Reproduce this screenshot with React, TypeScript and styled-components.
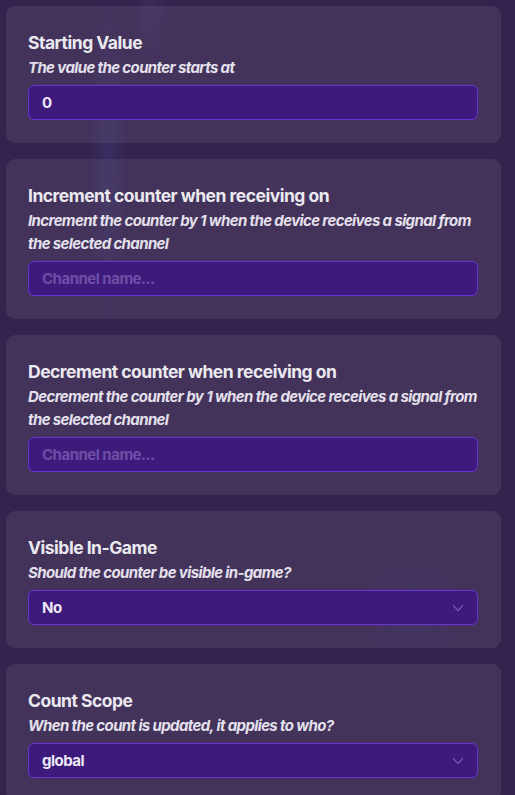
import React from 'react';
import styled, { createGlobalStyle } from 'styled-components';

const GlobalStyle = createGlobalStyle`
  html, body {
    margin: 0;
    padding: 0;
    background: #33234d;
    font-family: Inter, "Noto Sans", "Liberation Sans", sans-serif;
    overflow: hidden;
  }
`;

const Page = styled.div`
  min-height: 795px;
  box-sizing: border-box;
  padding: 6px 14px 0 6px;
  display: flex;
  flex-direction: column;
  gap: 16px;
  background-color: #33234d;
  background-image:
    radial-gradient(ellipse 20px 170px at 108px 160px, rgba(70, 75, 150, 0.28), rgba(70, 75, 150, 0) 100%),
    radial-gradient(ellipse 20px 60px at 150px 10px, rgba(90, 80, 140, 0.2), rgba(90, 80, 140, 0) 100%),
    radial-gradient(circle 52px at 412px 612px, rgba(45, 35, 100, 0.5), rgba(45, 35, 100, 0) 100%);
`;

const Card = styled.div`
  background: rgba(95, 80, 115, 0.38);
  border-radius: 9px;
  padding: 24px 23px 23px 22px;
  display: flex;
  flex-direction: column;
`;

const Title = styled.div`
  color: #ebe9f0;
  font-size: 17.5px;
  line-height: 25px;
  font-weight: 700;
  letter-spacing: -0.5px;
`;

const Description = styled.div`
  color: #e4e0ec;
  font-size: 15px;
  line-height: 23px;
  font-weight: 700;
  font-style: italic;
  letter-spacing: -0.62px;
  margin: 1px -10px 6px 0;
`;

const Field = styled.div<{ $placeholder?: boolean }>`
  height: 35px;
  box-sizing: border-box;
  background: #3d1a7c;
  border: 1px solid #6935d2;
  border-radius: 6px;
  padding: 0 13px 0 13px;
  display: flex;
  align-items: center;
  justify-content: space-between;
  color: ${p => (p.$placeholder ? '#6c50a6' : '#ece8f4')};
  font-size: 15px;
  font-weight: 700;
  letter-spacing: -0.5px;
`;

const Chevron = () => (
  <svg width="12" height="8" viewBox="0 0 12 8" fill="none">
    <path d="M1 1.2 L6 6.6 L11 1.2" stroke="#7a5cb6" strokeWidth="1.2" />
  </svg>
);

type Setting = {
  title: string;
  description: string;
  value: string;
  placeholder?: boolean;
  select?: boolean;
};

const settings: Setting[] = [
  { title: 'Starting Value', description: 'The value the counter starts at', value: '0' },
  {
    title: 'Increment counter when receiving on',
    description: 'Increment the counter by 1 when the device receives a signal from the selected channel',
    value: 'Channel name...',
    placeholder: true,
  },
  {
    title: 'Decrement counter when receiving on',
    description: 'Decrement the counter by 1 when the device receives a signal from the selected channel',
    value: 'Channel name...',
    placeholder: true,
  },
  { title: 'Visible In-Game', description: 'Should the counter be visible in-game?', value: 'No', select: true },
  { title: 'Count Scope', description: 'When the count is updated, it applies to who?', value: 'global', select: true },
];

export default function App() {
  return (
    <>
      <GlobalStyle />
      <Page>
        {settings.map(s => (
          <Card key={s.title}>
            <Title>{s.title}</Title>
            <Description>{s.description}</Description>
            <Field $placeholder={s.placeholder}>
              <span>{s.value}</span>
              {s.select && <Chevron />}
            </Field>
          </Card>
        ))}
      </Page>
    </>
  );
}
